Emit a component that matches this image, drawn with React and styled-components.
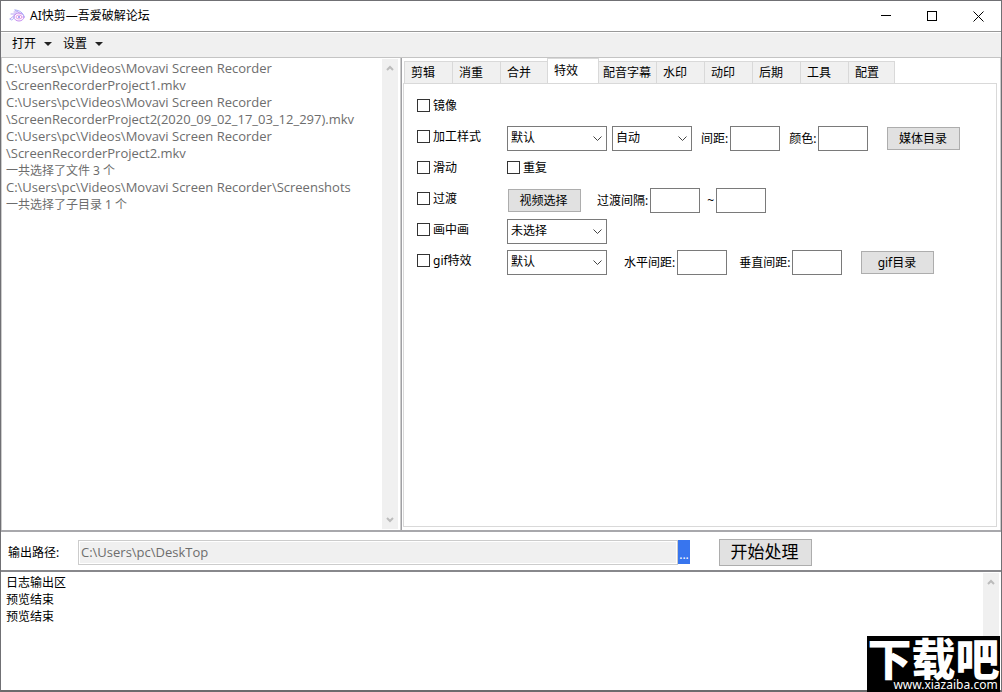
import React from "react";
import styled, { createGlobalStyle } from "styled-components"

const GlobalStyle = createGlobalStyle`
* {
box-sizing: border-box;
}
body {
margin: 0;
background: #fff;
}
body, button, input, select, textarea {
font-family: "Noto Sans", "Noto Sans CJK SC", sans-serif;
font-size: 12px;
color: #000;
}
`

const AppWindow = styled.div`
position: relative;
min-height: 100vh;
display: flex;
flex-direction: column;
border: 1px solid #707074;
border-bottom: 2px solid #6a6a6c;
`

const TitleBar = styled.header`
height: 31px;
display: flex;
align-items: center;
border-bottom: 1px solid #999;
padding-left: 8px;
`
const Title = styled.h1`
flex: 1;
margin: 0 0 0 5px;
font-size: 12px;
font-weight: normal;
line-height: 18px;
`
const WindowButton = styled.button`
width: 46px;
height: 30px;
padding: 0;
border: none;
background: none;
display: flex;
align-items: center;
justify-content: center;
`

const MenuBar = styled.nav`
height: 26px;
display: flex;
align-items: center;
gap: 11px;
padding: 0 0 2px 11px;
background: #f0f0f0;
border-top: 1px solid #fff;
border-bottom: 1px solid #c4c4c4;
`
const MenuButton = styled.button`
display: flex;
align-items: center;
gap: 8px;
padding: 0;
border: none;
background: none;
line-height: 18px;
&::after {
content: "";
border: 4px solid transparent;
border-top-color: #222;
border-bottom: none;
}
`

const Main = styled.main`
flex: 1;
display: grid;
grid-template-columns: 2fr 3fr;
border-bottom: 2px solid #a8a8ac;
`
const FilePanel = styled.section`
display: flex;
border-left: 1px solid #ccc;
border-right: 1px solid #ccc;
padding-right: 2px;
`
const FileList = styled.div`
flex: 1;
padding: 2px 4px;
color: #6d6d6d;
line-height: 17px;
`
const Line = styled.p`
margin: 0;
font-family: ${props => props.$path ? "\"Open Sans\", sans-serif" : "inherit"};
font-size: ${props => props.$path ? "13px" : "12px"};
`
const ScrollBar = styled.div`
width: 16px;
margin: 1px 0;
padding: 6px 0;
display: flex;
flex-direction: column;
align-items: center;
justify-content: space-between;
background: #f0f0f0;
`

const SettingsPanel = styled.section`
display: flex;
flex-direction: column;
border-left: 1px solid #a0a0a4;
border-right: 1px solid #ccc;
padding: 1px 3px 3px 1px;
`
const TabList = styled.div`
height: 24px;
display: flex;
align-items: flex-end;
padding-left: 1px;
`
const Tab = styled.button`
height: ${props => props.$active ? "26px" : "22px"};
width: ${props => props.$width || 48}px;
flex: none;
padding: 0 ${props => props.$wide ? 4 : 6}px;
padding-bottom: ${props => props.$active ? "4px" : "1px"};
border: 1px solid #d9d9d9;
border-bottom: none;
border-right-width: ${props => props.$active || props.$last ? "1px" : "0"};
border-left-width: ${props => props.$wide ? "0" : "1px"};
background: ${props => props.$active ? "#fff" : "#f0f0f0"};
margin-bottom: ${props => props.$active ? "-1px" : "0"};
text-align: left;
white-space: nowrap;
`
const TabBody = styled.div`
flex: 1;
padding: 8px 13px;
border: 1px solid #d9d9d9;
`

const FormRow = styled.div`
height: 31px;
display: grid;
grid-template-columns: 90px 1fr;
align-items: center;
`
const Controls = styled.div`
display: flex;
align-items: center;
`
const CheckLabel = styled.label`
display: flex;
align-items: center;
gap: 3px;
padding-bottom: 4px;
line-height: 18px;
`
const CheckBox = styled.input`
appearance: none;
width: 13px;
height: 13px;
margin: 0;
border: 1px solid #333;
background: #fff;
&:checked {
background: #333;
}
`
const SelectBox = styled.span`
position: relative;
width: ${props => props.$width}px;
margin-right: 5px;
`
const Select = styled.select`
appearance: none;
display: block;
width: 100%;
height: 25px;
padding: 0 20px 2px 3px;
border: 1px solid #7a7a7a;
border-radius: 0;
background: #fff;
`
const SelectArrow = styled.svg`
position: absolute;
right: 5px;
top: 10px;
pointer-events: none;
`
const Field = styled.label`
display: flex;
align-items: center;
gap: 2px;
margin-left: ${props => props.$gap}px;
line-height: 18px;
white-space: nowrap;
`
const SmallInput = styled.input`
width: 50px;
height: 25px;
padding: 0 3px;
border: 1px solid #7a7a7a;
`
const Button = styled.button`
width: 73px;
height: 23px;
padding: 0 2px 2px 0;
border: 1px solid #adadad;
background: #e1e1e1;
margin-left: ${props => props.$gap}px;
`

const OutputBar = styled.section`
height: 40px;
display: flex;
align-items: center;
padding: 2px 189px 0 7px;
border-bottom: 2px solid #88888c;
`
const OutputLabel = styled.label`
width: 70px;
`
const OutputInput = styled.input`
flex: 1;
min-width: 0;
height: 25px;
padding: 0 2px;
border: 1px solid #ccc;
box-shadow: inset 0 0 0 1px #fff;
background: #f0f0f0;
color: #6d6d6d;
font-family: "Open Sans", sans-serif;
font-size: 13px;
`
const BrowseButton = styled.button`
width: 12px;
height: 24px;
padding: 5px 0 0;
border: none;
background: #3875ee;
color: #fff;
`
const StartButton = styled.button`
width: 93px;
height: 27px;
padding: 0 2px 0 0;
margin-left: 29px;
border: 1px solid #adadad;
background: #e1e1e1;
font-size: 17px;
line-height: 24px;
`

const LogPanel = styled.section`
height: 118px;
display: flex;
padding-right: 2px;
`
const LogText = styled.div`
flex: 1;
padding: 2px 5px;
line-height: 17px;
`

const Watermark = styled.a`
position: absolute;
right: 1px;
bottom: -2px;
width: 133px;
height: 56px;
background: #000;
color: #fff;
text-align: center;
text-decoration: none;
`
const WatermarkName = styled.span`
display: block;
font-family: "Noto Sans CJK SC", sans-serif;
font-size: 44px;
font-weight: 900;
line-height: 42px;
white-space: nowrap;
`
const WatermarkUrl = styled.span`
display: block;
font-size: 12px;
line-height: 14px;
padding-left: 24px;
`

const files = [
  { text: "C:\\Users\\pc\\Videos\\Movavi Screen Recorder", path: true },
  { text: "\\ScreenRecorderProject1.mkv", path: true },
  { text: "C:\\Users\\pc\\Videos\\Movavi Screen Recorder", path: true },
  { text: "\\ScreenRecorderProject2(2020_09_02_17_03_12_297).mkv", path: true },
  { text: "C:\\Users\\pc\\Videos\\Movavi Screen Recorder", path: true },
  { text: "\\ScreenRecorderProject2.mkv", path: true },
  { text: "一共选择了文件 3 个" },
  { text: "C:\\Users\\pc\\Videos\\Movavi Screen Recorder\\Screenshots", path: true },
  { text: "一共选择了子目录 1 个" }
]

const tabs = [
  { name: "剪辑" },
  { name: "消重" },
  { name: "合并", width: 47 },
  { name: "特效", width: 52 },
  { name: "配音字幕", width: 57, wide: true },
  { name: "水印" },
  { name: "动印" },
  { name: "后期" },
  { name: "工具" },
  { name: "配置", width: 47, last: true }
]

const logs = ["日志输出区", "预览结束", "预览结束"]

const Logo = () => (
  <svg width="16" height="14" viewBox="0 0 16 14" fill="none" strokeLinecap="round">
    <path d="M1 10 L7 5 L2 5 M5 3 L8 3 M6 1 L12 5" stroke="#b9a3f2" />
    <ellipse cx="10" cy="8" rx="5" ry="4" stroke="#c58cf0" />
    <ellipse cx="10" cy="8" rx="3" ry="2" stroke="#e59be6" />
    <path d="M1 10 C3 13 5 9 5 8 M6 1 C10 1 15 4 15 8" stroke="#a8b0f8" />
    <circle cx="10" cy="8" r="1" fill="#8f8af0" />
  </svg>
)

const Arrow = ({ down }) => (
  <svg width="8" height="6" viewBox="0 0 8 6" fill="none">
    <path d={down ? "M1 1 L4 4 L7 1" : "M1 5 L4 2 L7 5"} stroke="#bcbcbc" strokeWidth="2" />
  </svg>
)

const Check = ({ children }) => (
  <CheckLabel>
    <CheckBox type="checkbox" />
    {children}
  </CheckLabel>
)

const DropDown = ({ label, width, options }) => (
  <SelectBox $width={width}>
    <Select aria-label={label}>
      {options.map(option => <option key={option}>{option}</option>)}
    </Select>
    <SelectArrow width="9" height="6" viewBox="0 0 9 6" fill="none">
      <path d="M0.5 0.5 L4.5 4.5 L8.5 0.5" stroke="#444" />
    </SelectArrow>
  </SelectBox>
)

export default class App extends React.Component {

  state = {
    tab: "特效",
    output: "C:\\Users\\pc\\DeskTop"
  }

  mudarTab = (name) => {
    this.setState({ tab: name })
  }

  render() {
    return (
      <AppWindow>
        <GlobalStyle />
        <TitleBar>
          <Logo />
          <Title>AI快剪—吾爱破解论坛</Title>
          <WindowButton aria-label="最小化">
            <svg width="11" height="11"><path d="M0 4.5 H10" stroke="#000" /></svg>
          </WindowButton>
          <WindowButton aria-label="最大化">
            <svg width="11" height="11"><rect x="0.5" y="0.5" width="9" height="9" fill="none" stroke="#000" /></svg>
          </WindowButton>
          <WindowButton aria-label="关闭">
            <svg width="11" height="11"><path d="M0.5 0.5 L10.5 10.5 M10.5 0.5 L0.5 10.5" stroke="#000" /></svg>
          </WindowButton>
        </TitleBar>

        <MenuBar>
          <MenuButton>打开</MenuButton>
          <MenuButton>设置</MenuButton>
        </MenuBar>

        <Main>
          <FilePanel>
            <FileList>
              {files.map((file, i) => <Line key={i} $path={file.path}>{file.text}</Line>)}
            </FileList>
            <ScrollBar>
              <Arrow />
              <Arrow down />
            </ScrollBar>
          </FilePanel>

          <SettingsPanel>
            <TabList role="tablist">
              {tabs.map(tab => (
                <Tab
                  key={tab.name}
                  role="tab"
                  aria-selected={tab.name === this.state.tab}
                  $active={tab.name === this.state.tab}
                  $width={tab.width}
                  $wide={tab.wide}
                  $last={tab.last}
                  onClick={() => this.mudarTab(tab.name)}
                >
                  {tab.name}
                </Tab>
              ))}
            </TabList>
            <TabBody role="tabpanel">
              <FormRow>
                <Check>镜像</Check>
              </FormRow>
              <FormRow>
                <Check>加工样式</Check>
                <Controls>
                  <DropDown label="加工样式" width={100} options={["默认"]} />
                  <DropDown label="加工方式" width={80} options={["自动"]} />
                  <Field $gap={4}>间距:<SmallInput type="text" /></Field>
                  <Field $gap={9}>颜色:<SmallInput type="text" /></Field>
                  <Button $gap={19}>媒体目录</Button>
                </Controls>
              </FormRow>
              <FormRow>
                <Check>滑动</Check>
                <Check>重复</Check>
              </FormRow>
              <FormRow>
                <Check>过渡</Check>
                <Controls>
                  <Button $gap={1}>视频选择</Button>
                  <Field $gap={16}>过渡间隔:<SmallInput type="text" /></Field>
                  <Field $gap={7}>~<SmallInput type="text" /></Field>
                </Controls>
              </FormRow>
              <FormRow>
                <Check>画中画</Check>
                <Controls>
                  <DropDown label="画中画" width={100} options={["未选择"]} />
                </Controls>
              </FormRow>
              <FormRow>
                <Check>gif特效</Check>
                <Controls>
                  <DropDown label="gif特效" width={100} options={["默认"]} />
                  <Field $gap={12}>水平间距:<SmallInput type="text" /></Field>
                  <Field $gap={12}>垂直间距:<SmallInput type="text" /></Field>
                  <Button $gap={19}>gif目录</Button>
                </Controls>
              </FormRow>
            </TabBody>
          </SettingsPanel>
        </Main>

        <OutputBar>
          <OutputLabel htmlFor="output">输出路径:</OutputLabel>
          <OutputInput id="output" type="text" readOnly value={this.state.output} />
          <BrowseButton aria-label="选择输出路径">...</BrowseButton>
          <StartButton>开始处理</StartButton>
        </OutputBar>

        <LogPanel>
          <LogText>
            {logs.map((log, i) => <Line key={i}>{log}</Line>)}
          </LogText>
          <ScrollBar>
            <Arrow />
          </ScrollBar>
        </LogPanel>

        <Watermark href="#">
          <WatermarkName>下载吧</WatermarkName>
          <WatermarkUrl>www.xiazaiba.com</WatermarkUrl>
        </Watermark>
      </AppWindow>
    )
  }
}
